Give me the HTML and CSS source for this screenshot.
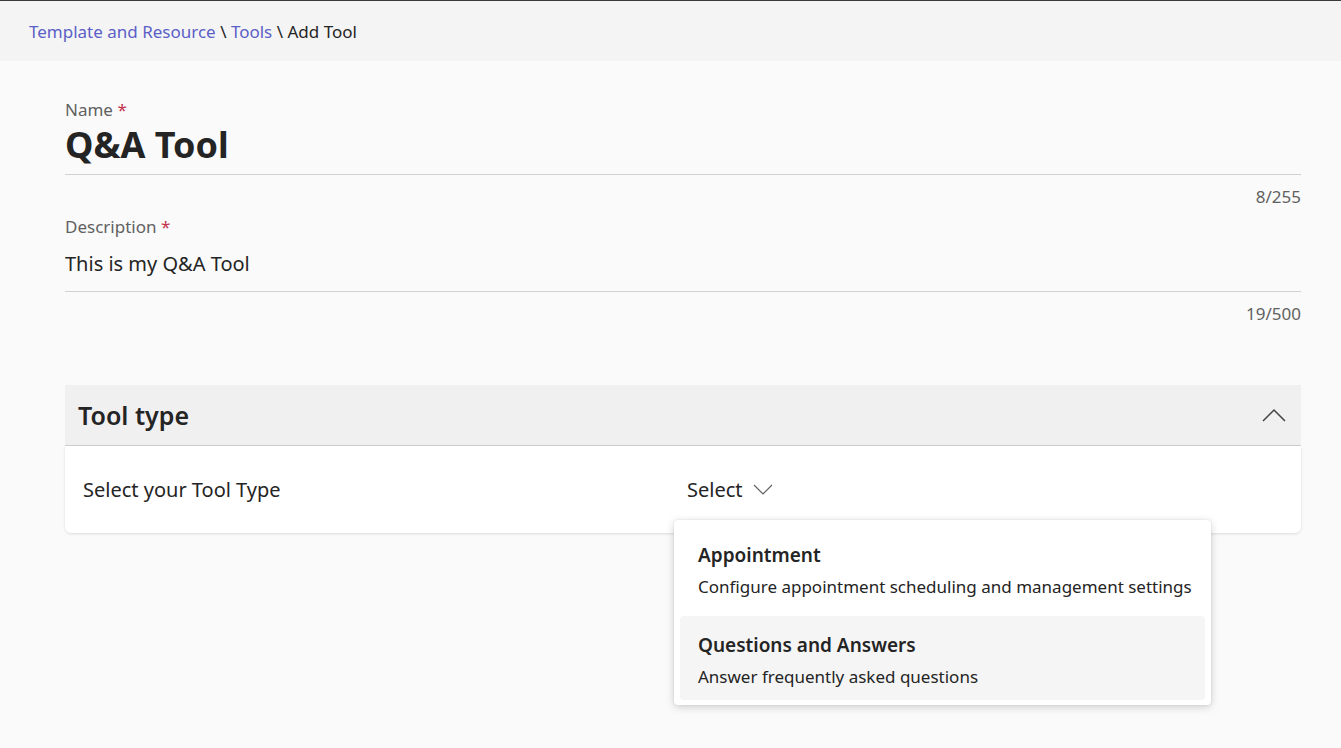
FILE: index.html
```html
<!DOCTYPE html>
<html lang="en">
<head>
<meta charset="UTF-8" />
<meta name="viewport" content="width=device-width, initial-scale=1" />
<title>Add Tool</title>
<link rel="stylesheet" href="styles.css">
</head>
<body>
  <div class="breadcrumb">
    <a href="#">Template and Resource</a> \ <a href="#">Tools</a> \ <span class="current">Add Tool</span>
  </div>

  <div class="content">
    <div class="field">
      <label class="field-label">Name <span class="req">*</span></label>
      <div class="field-input title-input">Q&amp;A Tool</div>
      <div class="counter">8/255</div>
    </div>

    <div class="field">
      <label class="field-label">Description <span class="req">*</span></label>
      <div class="field-input">This is my Q&amp;A Tool</div>
      <div class="counter">19/500</div>
    </div>

    <div class="section">
      <div class="section-header">
        <h2>Tool type</h2>
        <svg class="chevron-up" width="24" height="14" viewBox="0 0 24 14">
          <path d="M1 13 L12 2 L23 13" fill="none" stroke="#424242" stroke-width="1.5" />
        </svg>
      </div>
      <div class="section-body">
        <div class="row-label">Select your Tool Type</div>
        <div class="select-wrap">
          <div class="select-trigger">
            Select
            <svg width="20" height="12" viewBox="0 0 20 12">
              <path d="M1 1 L10 10 L19 1" fill="none" stroke="#616161" stroke-width="1.2" />
            </svg>
          </div>
          <div class="dropdown">
            <div class="option">
              <div class="option-title">Appointment</div>
              <div class="option-desc">Configure appointment scheduling and management settings</div>
            </div>
            <div class="option active">
              <div class="option-title">Questions and Answers</div>
              <div class="option-desc">Answer frequently asked questions</div>
            </div>
          </div>
        </div>
      </div>
    </div>
  </div>
</body>
</html>
```

FILE: styles.css
```css
body {
  margin: 0;
  font-family: "Noto Sans", "Open Sans", sans-serif;
  background: #fafafa;
  color: #242424;
  border-top: 1px solid #3a3a3a;
  min-height: 747px;
}
.breadcrumb {
  height: 60px;
  line-height: 61px;
  padding-left: 29px;
  background: #f4f4f4;
  font-size: 17px;
  color: #242424;
}
.breadcrumb a {
  color: #5b5fc7;
  text-decoration: none;
}
.content {
  padding: 38px 40px 0 65px;
}
.field-label {
  display: block;
  font-size: 17px;
  line-height: 22px;
  color: #616161;
}
.req {
  color: #c4314b;
}
.field-input {
  font-size: 20px;
  line-height: 26px;
  padding: 13px 0 14px;
  border-bottom: 1px solid #d1d1d1;
}
.title-input {
  font-size: 36px;
  font-weight: 700;
  line-height: 44px;
  padding: 2px 0 7px;
}
.counter {
  text-align: right;
  font-size: 17px;
  line-height: 22px;
  color: #616161;
  margin: 11px 0 8px;
}
.section {
  margin-top: 60px;
}
.section-header {
  height: 60px;
  display: flex;
  align-items: center;
  justify-content: space-between;
  padding: 0 15px 0 13px;
  background: #f0f0f0;
  border-bottom: 1px solid #d1d1d1;
}
.section-header h2 {
  margin: 0;
  font-size: 25px;
  font-weight: 600;
}
.section-body {
  height: 87px;
  display: flex;
  align-items: center;
  padding: 0 18px;
  background: #fff;
  border-radius: 0 0 6px 6px;
  box-shadow: 0 1px 3px rgba(0, 0, 0, 0.12);
}
.row-label {
  width: 604px;
  font-size: 20px;
}
.select-wrap {
  position: relative;
}
.select-trigger {
  display: flex;
  align-items: center;
  gap: 10px;
  font-size: 20px;
  color: #242424;
}
.dropdown {
  position: absolute;
  left: -13px;
  top: 44px;
  width: 525px;
  padding: 6px 6px 5px;
  display: flex;
  flex-direction: column;
  gap: 6px;
  background: #fff;
  border-radius: 4px;
  box-shadow: 0 2px 8px rgba(0, 0, 0, 0.18), 0 0 2px rgba(0, 0, 0, 0.1);
}
.option {
  padding: 16px 18px 12px;
  border-radius: 4px;
}
.option.active {
  background: #f5f5f5;
}
.option-title {
  font-size: 19px;
  font-weight: 600;
  line-height: 26px;
}
.option-desc {
  font-size: 17px;
  line-height: 22px;
  margin-top: 8px;
  white-space: nowrap;
}
```
